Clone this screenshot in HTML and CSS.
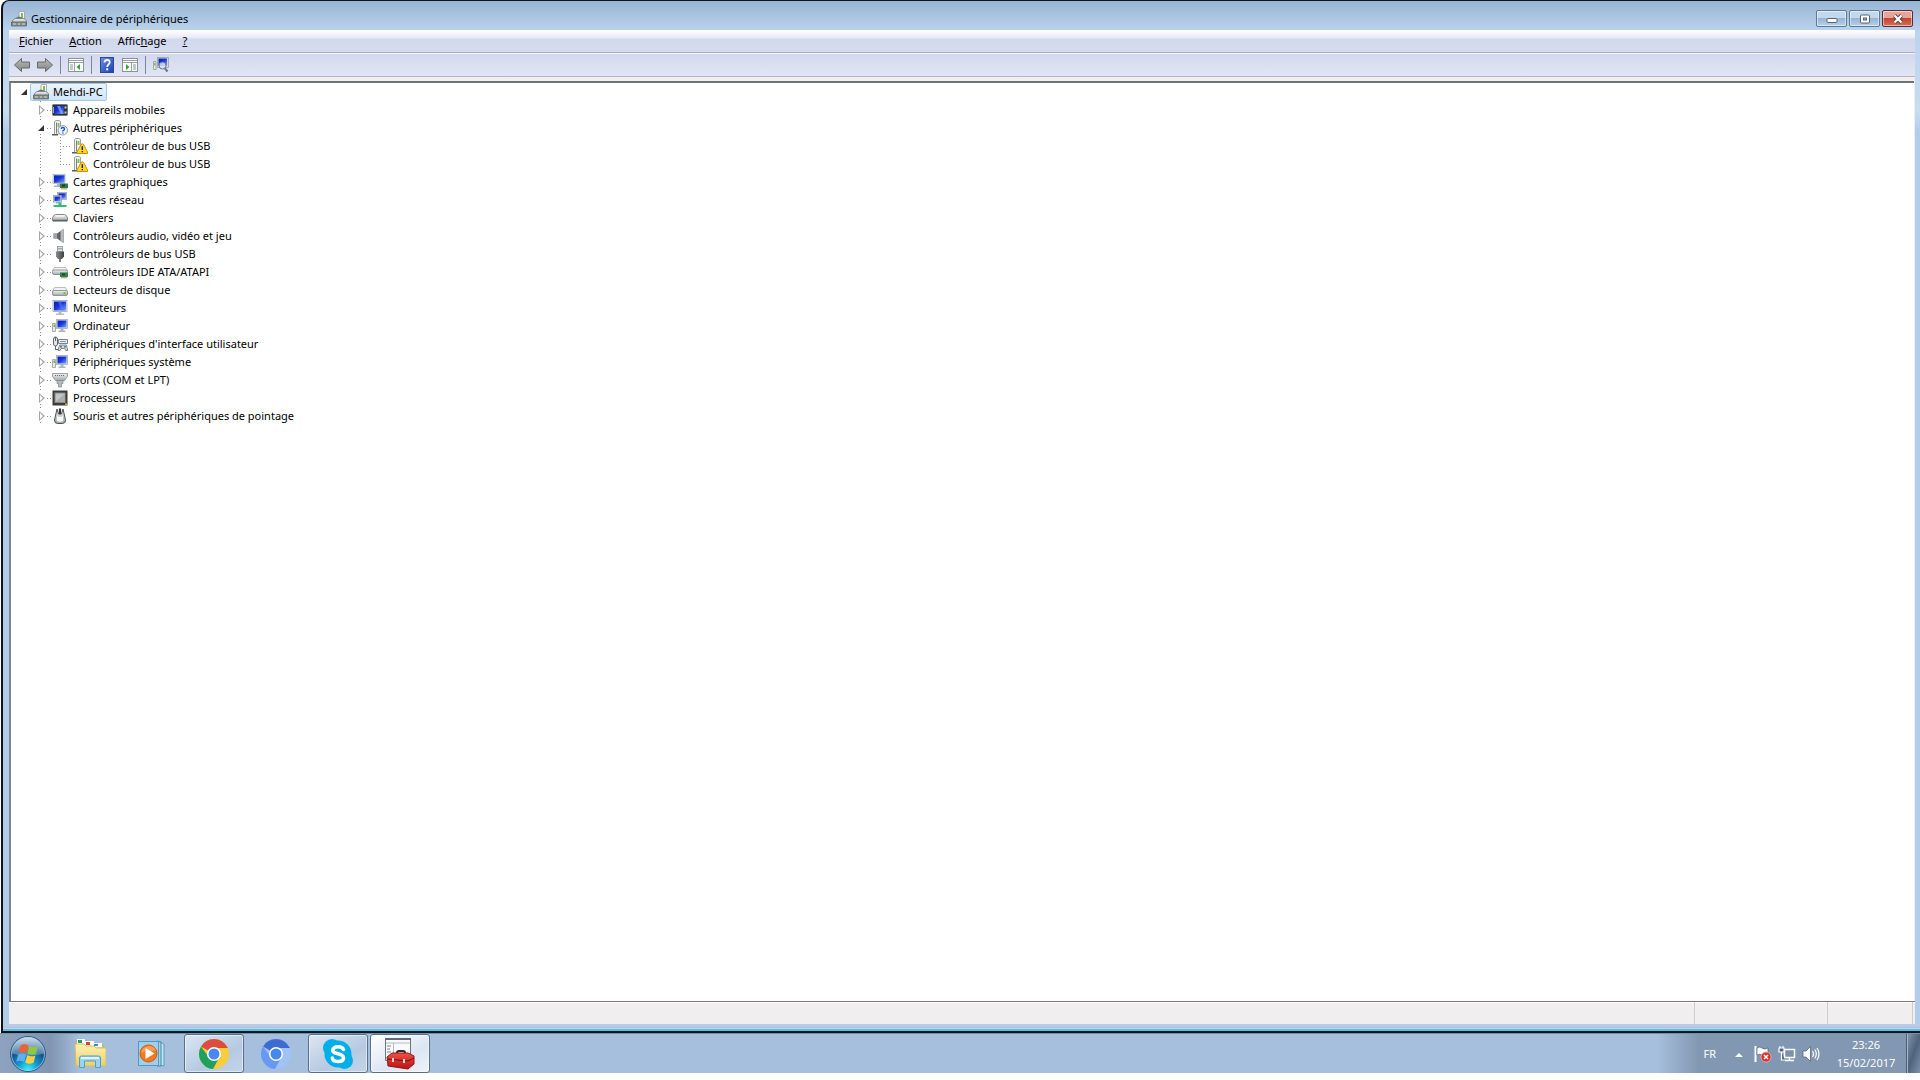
FILE: index.html
```html
<!DOCTYPE html>
<html lang="fr">
<head>
    <meta charset="UTF-8">
    <meta name="viewport" content="width=device-width, initial-scale=1.0">
    <title>Gestionnaire de périphériques</title>
    <link rel="stylesheet" href="styles.css">
</head>
<body>
    <svg class="defs" aria-hidden="true">
        <defs>
            <linearGradient id="gScreen" x1="0" y1="0" x2="1" y2="1">
                <stop offset="0" stop-color="#0a1fb0"/>
                <stop offset="0.45" stop-color="#1733dc"/>
                <stop offset="1" stop-color="#7fa4f4"/>
            </linearGradient>
            <linearGradient id="gMetal" x1="0" y1="0" x2="0" y2="1">
                <stop offset="0" stop-color="#f2f3f3"/>
                <stop offset="1" stop-color="#a3a8aa"/>
            </linearGradient>
            <linearGradient id="gDark" x1="0" y1="0" x2="1" y2="0">
                <stop offset="0" stop-color="#8b8b8b"/>
                <stop offset="1" stop-color="#3f3f3f"/>
            </linearGradient>
            <linearGradient id="gArrow" x1="0" y1="0" x2="0" y2="1">
                <stop offset="0" stop-color="#b9b9b9"/>
                <stop offset="1" stop-color="#858585"/>
            </linearGradient>
            <linearGradient id="gHelp" x1="0" y1="0" x2="1" y2="1">
                <stop offset="0" stop-color="#6c8fe6"/>
                <stop offset="1" stop-color="#1d3fae"/>
            </linearGradient>
            <radialGradient id="gOrb" cx="0.5" cy="0.95" r="0.85">
                <stop offset="0" stop-color="#3cf0ff"/>
                <stop offset="0.35" stop-color="#1497cf"/>
                <stop offset="0.7" stop-color="#14528a"/>
                <stop offset="1" stop-color="#3f6f9d"/>
            </radialGradient>
            <linearGradient id="gShine" x1="0" y1="0" x2="0" y2="1">
                <stop offset="0" stop-color="#e5f0f8" stop-opacity="0.85"/>
                <stop offset="1" stop-color="#a8c4dc" stop-opacity="0.35"/>
            </linearGradient>
            <linearGradient id="gFolder" x1="0" y1="0" x2="0" y2="1">
                <stop offset="0" stop-color="#fdf3b4"/>
                <stop offset="1" stop-color="#e9cf6c"/>
            </linearGradient>
            <linearGradient id="gRed" x1="0" y1="0" x2="0" y2="1">
                <stop offset="0" stop-color="#ee5148"/>
                <stop offset="1" stop-color="#b51313"/>
            </linearGradient>
        </defs>
        <symbol id="i-computer" viewBox="0 0 16 16">
            <path d="M8 8V1.500Q8 .5 9 .5H13.500V9H8Z" fill="#f4f5f2" stroke="#9a9d98" stroke-width="0.8"/>
            <path d="M10 2h2v5h-2z" fill="#7cc04a"/>
            <path d="M4.500 7 8 5.500l4 1.500-1 2H4Z" fill="#6b7070"/>
            <path d="M1.500 9.500 4 7.500h9l2.500 2v3H1.500Z" fill="url(#gMetal)" stroke="#747a7c" stroke-width="0.8"/>
            <path d="M0.500 11h15v4h-15z" fill="#858b8c" stroke="#555b5b" stroke-width="0.7"/>
            <path d="M2 13h3m2 0h2m2 0h3" stroke="#d4d8d8"/>
        </symbol>
        <symbol id="i-mobile" viewBox="0 0 16 16">
            <rect x="0.500" y="2.500" width="15" height="11" rx="1" fill="#2f3238" stroke="#777b82"/>
            <rect x="2.500" y="4" width="9" height="8" fill="url(#gScreen)"/>
            <path d="M5 4h3l3.500 8H9Z" fill="#7da3ff" opacity="0.8"/>
            <path d="M12.500 4.500h2v2h-2zM12.500 9.500h2v2h-2z" fill="#c9cdd3"/>
            <path d="M1 5h1v6H1z" fill="#a9adb3"/>
        </symbol>
        <symbol id="i-tower" viewBox="0 0 16 16">
            <path d="M2.500 1.500 4 .5h3l1.500 1v12l-4 1H2.500Z" fill="#f3f4f2" stroke="#858985" stroke-width="0.8"/>
            <path d="M4.500 2.500v11" stroke="#7c807c"/>
            <path d="M5.500 3h2v4h-2z" fill="#82bf5c"/>
            <path d="M0 14h6v1.500H0z" fill="#565c5c"/>
        </symbol>
        <symbol id="i-unknown" viewBox="0 0 16 16">
            <use href="#i-tower"/>
            <circle cx="10.800" cy="10.300" r="4.700" fill="#f1f5fc" stroke="#8190aa" stroke-width="0.9"/>
            <path d="M9.200 9Q9.300 7.500 10.900 7.500T12.500 9Q12.500 9.900 11.500 10.400T10.900 11.500" fill="none" stroke="#2450b8" stroke-width="1.300"/>
            <circle cx="10.900" cy="13" r="0.800" fill="#2450b8"/>
        </symbol>
        <symbol id="i-warning" viewBox="0 0 16 16">
            <use href="#i-tower"/>
            <path d="M9 6.500Q10.300 5 11.600 6.500L15.500 14v1.500H5V14Z" fill="#ffd52e" stroke="#c59400" stroke-linejoin="round"/>
            <path d="M10.300 8.300v3.700M10.300 13v1.300" stroke="#2b2100" stroke-width="1.400"/>
        </symbol>
        <symbol id="i-monitor" viewBox="0 0 16 16">
            <rect x="1" y="0.500" width="14" height="11" fill="#dfe4ea" stroke="#8f9aa5" stroke-width="0.700"/>
            <rect x="2" y="1.500" width="12" height="9" fill="url(#gScreen)"/>
            <path d="M6 1.500h3l4 9h-4Z" fill="#4f74f5" opacity="0.600"/>
            <path d="M6.500 11.500h3v2h2.500v1.500H4v-1.500h2.500z" fill="#b6bbbf"/>
        </symbol>
        <symbol id="i-display" viewBox="0 0 16 16">
            <rect x="1" y="0.500" width="12" height="9" fill="#dfe4ea" stroke="#a3adb8" stroke-width="0.700"/>
            <rect x="2" y="1.300" width="10.500" height="7.500" fill="url(#gScreen)"/>
            <path d="M5 9.500h4v2H5zM2 11.500h8V13H2z" fill="#aeb4b8"/>
            <path d="M8 9.500h8v4.500H8z" fill="#2f7a4c"/>
            <path d="M9 14h6v1.500H9z" fill="#d1b954"/>
            <path d="M10 10.500h3v2h-3z" fill="#173d2a"/>
        </symbol>
        <symbol id="i-network" viewBox="0 0 16 16">
            <rect x="5.500" y="0.500" width="9" height="7" fill="#d8dee8" stroke="#8b97ab" stroke-width="0.700"/>
            <rect x="6.500" y="1.300" width="7.300" height="5.300" fill="url(#gScreen)"/>
            <rect x="1.500" y="3.500" width="8" height="6.500" fill="#d8dee8" stroke="#8b97ab" stroke-width="0.700"/>
            <rect x="2.500" y="4.500" width="6" height="4.500" fill="url(#gScreen)"/>
            <path d="M4 10h4v1.500H4z" fill="#a4aab4"/>
            <path d="M6.500 10.500h3v2.500h5v2h-13v-2h5z" fill="#2fbd78"/>
        </symbol>
        <symbol id="i-keyboard" viewBox="0 0 16 16">
            <path d="M3.500 4.500h9Q14.500 4.500 15.500 8v3h-15V8Q1.500 4.500 3.500 4.500Z" fill="url(#gMetal)" stroke="#868b8e"/>
            <path d="M1 10.500h14" stroke="#5d6264" stroke-width="1.500"/>
            <path d="M4 6h8" stroke="#fff"/>
        </symbol>
        <symbol id="i-audio" viewBox="0 0 16 16">
            <path d="M1.500 5.500h3.500L11.500 1v14L5 10.500H1.500Z" fill="url(#gDark)"/>
            <path d="M5 5.500v5H1.500v-5z" fill="#a0a4a7"/>
            <path d="M8.500 3 11.500 1v14l-3-2Z" fill="#b7babd"/>
        </symbol>
        <symbol id="i-usb" viewBox="0 0 16 16">
            <rect x="5.500" y="0.500" width="5" height="5" fill="#e3e5e6" stroke="#8c9092" stroke-width="0.800"/>
            <path d="M6.500 2h1v1.500h-1zM8.500 2h1v1.500h-1z" fill="#6b6e70"/>
            <path d="M4 5.500h8v5L10 13H6L4 10.500Z" fill="url(#gDark)"/>
            <path d="M8 13v3" stroke="#555" stroke-width="1.500"/>
        </symbol>
        <symbol id="i-disk" viewBox="0 0 16 16">
            <path d="M2.500 5.500h11l2 4H.5Z" fill="#f1f2f2" stroke="#a2a6a8" stroke-width="0.700"/>
            <rect x="0.500" y="8.500" width="15" height="5" rx="1.500" fill="url(#gMetal)" stroke="#7d8284" stroke-width="0.800"/>
            <path d="M11.500 10h2v2h-2z" fill="#6cc435"/>
        </symbol>
        <symbol id="i-ide" viewBox="0 0 16 16">
            <path d="M2.500 3.500h11l2 3H.5Z" fill="#f1f2f2" stroke="#a2a6a8" stroke-width="0.700"/>
            <rect x="0.500" y="6" width="15" height="4.500" rx="1.500" fill="url(#gMetal)" stroke="#7d8284" stroke-width="0.800"/>
            <path d="M8 8.500h8V13H8z" fill="#2f8453"/>
            <path d="M9 13h6v1.300H9z" fill="#bfb25a"/>
            <path d="M10 9.500h3v2h-3z" fill="#174a30"/>
        </symbol>
        <symbol id="i-pc" viewBox="0 0 16 16">
            <rect x="4.500" y="1.500" width="11" height="9" fill="#dfe4ea" stroke="#97a2ae" stroke-width="0.700"/>
            <rect x="5.500" y="2.500" width="9" height="7" fill="url(#gScreen)"/>
            <path d="M8.500 10.500h3v2h2V14h-7v-1.500h2z" fill="#b0b5b9"/>
            <path d="M0.500 5.500h3v8h-3z" fill="#e7e9e7" stroke="#8b908b" stroke-width="0.700"/>
            <path d="M1.500 6.500h1.500V9H1.500z" fill="#6cb548"/>
        </symbol>
        <symbol id="i-hid" viewBox="0 0 16 16">
            <rect x="1.500" y="1" width="4" height="9" rx="2" fill="#e4e6e7" stroke="#62686b"/>
            <path d="M3.500 1v4M3.500 10v3.500H7" fill="none" stroke="#62686b"/>
            <path d="M6.500 3.500h9v4h-9z" fill="#ebeced" stroke="#6f7578" stroke-width="0.900"/>
            <path d="M8 5.500h6" stroke="#8d9396"/>
            <path d="M7.500 9h7l1.200 5.500h-2l-1-2H9l-1 2H6Z" fill="#d5d8da" stroke="#6c7275" stroke-width="0.800"/>
            <circle cx="9" cy="10.800" r="1" fill="#3b83bd"/>
            <circle cx="13" cy="10.800" r="1" fill="#3b83bd"/>
        </symbol>
        <symbol id="i-port" viewBox="0 0 16 16">
            <path d="M0.500 1.500h15v3l-3 4h-9l-3-4Z" fill="url(#gMetal)" stroke="#888d91" stroke-width="0.800"/>
            <path d="M3 3.500h10" stroke="#62686b" stroke-dasharray="1 1"/>
            <path d="M5 8.500h6v3H9.500V15h-3v-3.500H5Z" fill="#b4babe" stroke="#7c8286" stroke-width="0.700"/>
        </symbol>
        <symbol id="i-cpu" viewBox="0 0 16 16">
            <rect x="0.500" y="0.500" width="15" height="15" fill="#3e3d38"/>
            <rect x="3" y="3" width="10" height="9.500" fill="#c3c5c6" stroke="#85878a"/>
            <path d="m3.500 12 9.500-8.500V12z" fill="#aaadae"/>
            <path d="M13 13.500h2v2h-2z" fill="#d3a92c"/>
        </symbol>
        <symbol id="i-mouse" viewBox="0 0 16 16">
            <path d="M5 1 2.500 12q0 3.500 3 3.500h5q3 0 3-3.500L11 1 9.500 6h-3Z" fill="url(#gMetal)" stroke="#4c5153"/>
            <path d="M8 .5V6" stroke="#333" stroke-width="2.200"/>
            <path d="M5 8q3 2 6 0v5q-3 1.500-6 0Z" fill="#f8f9f9"/>
        </symbol>
        <symbol id="i-panel" viewBox="0 0 16 16">
            <rect x="0.500" y="1.500" width="15" height="13" fill="#fbfbfb" stroke="#8e9297"/>
            <path d="M1 3.500h14M1 5.500h14" stroke="#9ca1a7"/>
            <path d="M6.500 6v8" stroke="#9ca1a7"/>
            <path d="M2 8h3M2 10h3M2 12h3" stroke="#8a93a0"/>
            <path d="M12 7v6L8.500 10Z" fill="#35a635"/>
        </symbol>
        <symbol id="i-scan" viewBox="0 0 16 16">
            <rect x="4.500" y="0.500" width="11" height="10" fill="#d5dae0" stroke="#9098a2" stroke-width="0.700"/>
            <rect x="5.500" y="1.500" width="8.500" height="7.500" fill="url(#gScreen)"/>
            <path d="M0.500 4.500h2.500v8H.5z" fill="#e7e9e7" stroke="#8b908b" stroke-width="0.700"/>
            <path d="M1.200 6h1.300v2.500H1.200z" fill="#6cb548"/>
            <circle cx="9.500" cy="8.500" r="3.500" fill="#d9e8f8" fill-opacity="0.800" stroke="#6b7786"/>
            <path d="m12 11.500 2.500 3" stroke="#6b7786" stroke-width="2"/>
        </symbol>
    </svg>

    <main class="window">
        <header class="titlebar">
            <svg class="icon"><use href="#i-computer"/></svg>
            <h1>Gestionnaire de périphériques</h1>
            <div class="caption-buttons">
                <button class="caption-btn" aria-label="Réduire">
                    <svg width="12" height="10"><rect x="1" y="4.500" width="10" height="4" rx="1" fill="#fff" stroke="#59606e"/></svg>
                </button>
                <button class="caption-btn" aria-label="Agrandir">
                    <svg width="12" height="10"><rect x="1.500" y="1" width="9" height="8" rx="1" fill="#fff" stroke="#59606e"/><rect x="4.500" y="4" width="3" height="2" fill="#9dbbd8" stroke="#59606e"/></svg>
                </button>
                <button class="caption-btn close" aria-label="Fermer">
                    <svg width="12" height="10"><path d="m2.500 1.500 7 7m0-7-7 7" stroke="#5d3a40" stroke-width="4"/><path d="m2.500 1.500 7 7m0-7-7 7" stroke="#fff" stroke-width="2.300"/></svg>
                </button>
            </div>
        </header>

        <div class="client">
            <nav class="menubar">
                <button><u>F</u>ichier</button>
                <button><u>A</u>ction</button>
                <button>Affic<u>h</u>age</button>
                <button><u>?</u></button>
            </nav>
            <div class="toolbar">
                <button aria-label="Précédent"><svg class="icon"><path d="M.5 8 7.500 1.500v3.500h8v6h-8v3.500Z" fill="url(#gArrow)" stroke="#686868"/></svg></button>
                <button aria-label="Suivant"><svg class="icon"><path d="M15.500 8 8.500 1.500v3.500h-8v6h8v3.500Z" fill="url(#gArrow)" stroke="#686868"/></svg></button>
                <span class="separator"></span>
                <button aria-label="Afficher l'arborescence"><svg class="icon"><use href="#i-panel"/></svg></button>
                <span class="separator"></span>
                <button aria-label="Aide"><svg class="icon"><rect x="1.500" y="0.500" width="13" height="15" fill="url(#gHelp)" stroke="#2b489c"/><path d="M5.500 5.500Q5.700 3 8.200 3t2.500 2.300Q10.700 6.500 9.500 7.500T8.200 10" fill="none" stroke="#fff" stroke-width="1.800"/><path d="M7.200 11.300h2v2h-2z" fill="#fff"/></svg></button>
                <button aria-label="Afficher le volet Actions"><svg class="icon flip"><use href="#i-panel"/></svg></button>
                <span class="separator"></span>
                <button aria-label="Rechercher les modifications"><svg class="icon"><use href="#i-scan"/></svg></button>
            </div>

            <div class="tree">
                <div class="row root">
                    <button class="toggle open" aria-label="Réduire Mehdi-PC"></button>
                    <span class="selected"><svg class="icon"><use href="#i-computer"/></svg>Mehdi-PC</span>
                </div>
                <ul class="categories">
                    <li class="row"><button class="toggle" aria-label="Développer"></button><svg class="icon"><use href="#i-mobile"/></svg>Appareils mobiles</li>
                    <li>
                        <div class="row"><button class="toggle open" aria-label="Réduire"></button><svg class="icon"><use href="#i-unknown"/></svg>Autres périphériques</div>
                        <ul class="devices">
                            <li class="row"><svg class="icon"><use href="#i-warning"/></svg>Contrôleur de bus USB</li>
                            <li class="row"><svg class="icon"><use href="#i-warning"/></svg>Contrôleur de bus USB</li>
                        </ul>
                    </li>
                    <li class="row"><button class="toggle" aria-label="Développer"></button><svg class="icon"><use href="#i-display"/></svg>Cartes graphiques</li>
                    <li class="row"><button class="toggle" aria-label="Développer"></button><svg class="icon"><use href="#i-network"/></svg>Cartes réseau</li>
                    <li class="row"><button class="toggle" aria-label="Développer"></button><svg class="icon"><use href="#i-keyboard"/></svg>Claviers</li>
                    <li class="row"><button class="toggle" aria-label="Développer"></button><svg class="icon"><use href="#i-audio"/></svg>Contrôleurs audio, vidéo et jeu</li>
                    <li class="row"><button class="toggle" aria-label="Développer"></button><svg class="icon"><use href="#i-usb"/></svg>Contrôleurs de bus USB</li>
                    <li class="row"><button class="toggle" aria-label="Développer"></button><svg class="icon"><use href="#i-ide"/></svg>Contrôleurs IDE ATA/ATAPI</li>
                    <li class="row"><button class="toggle" aria-label="Développer"></button><svg class="icon"><use href="#i-disk"/></svg>Lecteurs de disque</li>
                    <li class="row"><button class="toggle" aria-label="Développer"></button><svg class="icon"><use href="#i-monitor"/></svg>Moniteurs</li>
                    <li class="row"><button class="toggle" aria-label="Développer"></button><svg class="icon"><use href="#i-pc"/></svg>Ordinateur</li>
                    <li class="row"><button class="toggle" aria-label="Développer"></button><svg class="icon"><use href="#i-hid"/></svg>Périphériques d'interface utilisateur</li>
                    <li class="row"><button class="toggle" aria-label="Développer"></button><svg class="icon"><use href="#i-pc"/></svg>Périphériques système</li>
                    <li class="row"><button class="toggle" aria-label="Développer"></button><svg class="icon"><use href="#i-port"/></svg>Ports (COM et LPT)</li>
                    <li class="row"><button class="toggle" aria-label="Développer"></button><svg class="icon"><use href="#i-cpu"/></svg>Processeurs</li>
                    <li class="row"><button class="toggle" aria-label="Développer"></button><svg class="icon"><use href="#i-mouse"/></svg>Souris et autres périphériques de pointage</li>
                </ul>
            </div>

            <div class="statusbar">
                <span></span>
                <span></span>
                <span></span>
            </div>
        </div>
    </main>

    <footer class="taskbar">
        <button class="start" aria-label="Démarrer">
            <svg width="38" height="38" viewBox="0 0 38 38">
                <circle cx="19" cy="19" r="17.500" fill="url(#gOrb)" stroke="#355b80"/>
                <path d="M2.500 18.500a16.500 16.500 0 0 1 33 0Q19 23 2.500 18.500Z" fill="url(#gShine)"/>
                <circle cx="19" cy="19" r="16.500" fill="none" stroke="#a9d2ea" stroke-opacity="0.700"/>
                <path d="M11.500 10.500q4-2.300 8 0l-2 7.500q-4-2-8 0Z" fill="#ee6132"/>
                <path d="M20.500 11q4 2.300 8.500.3l-2 7.500q-4 2-8.500-.3Z" fill="#92c83e"/>
                <path d="M9.200 19.500q4-2 8 .2l-2 7.300q-4-2.200-8-.2Z" fill="#5db0ec"/>
                <path d="M18.200 20.200q4.200 2.200 8.300.2l-2 7.400q-4.300 2-8.300-.3Z" fill="#fbd040"/>
            </svg>
        </button>
        <div class="apps">
            <button class="app" aria-label="Explorateur Windows">
                <svg width="32" height="32" viewBox="0 0 32 32">
                    <path d="M2 4h10l2 3h15v20H2Z" fill="#edd782" stroke="#c8a948"/>
                    <path d="M3 1h8v6H3z" fill="#fff"/><path d="M4 2h4v3H4z" fill="#28a052"/>
                    <path d="M11 3h9v5h-9z" fill="#fff"/><path d="M12 4h4v3h-4z" fill="#d04d2c"/>
                    <path d="M19 5h9v4h-9z" fill="#fff"/><path d="M20 6h4v2h-4z" fill="#328ec6"/>
                    <path d="M1 6h9l2 2h8l2 2h10v18H2Z" fill="url(#gFolder)" stroke="#d8bd5f"/>
                    <path d="M5.500 29.500V20q0-2 2-2h17q2 0 2 2v9.500h-5V23h-11v6.500Z" fill="#9bd3ef" stroke="#4f9fcb"/>
                    <path d="M7 20h18" stroke="#e2f5fd" stroke-width="2"/>
                </svg>
            </button>
            <button class="app" aria-label="Lecteur Windows Media">
                <svg width="32" height="32" viewBox="0 0 32 32">
                    <path d="m24 4 4 2v22l-4-1Z" fill="#c6e2f2" stroke="#5c9ec2"/>
                    <path d="m21 3 4 1v24h-4Z" fill="#a8d2e8" stroke="#3e88b2"/>
                    <path d="M2.500 3.500h20v24h-20Z" fill="#a0cfe9" stroke="#4f98bf"/>
                    <circle cx="12.500" cy="15.500" r="8.500" fill="#f27a20" stroke="#d3590a"/>
                    <path d="M5 14.500a8 8 0 0 1 15-2Q12.500 12.500 5 14.500Z" fill="#fbb37a" opacity="0.600"/>
                    <path d="m9.500 10 9 5.500-9 5.500z" fill="#fff"/>
                </svg>
            </button>
            <button class="app running" aria-label="Google Chrome">
                <svg width="32" height="32" viewBox="0 0 32 32">
                    <circle cx="16" cy="16" r="15" fill="#f7cd3a"/>
                    <path d="M16 16 3 8.500A15 15 0 0 1 29 8.500Q30 10 30 10H16Z" fill="#dc4c3f"/>
                    <path d="M3 8.500A15 15 0 0 0 15 31l6.500-12L16 16l-6 2Z" fill="#1fa15d"/>
                    <circle cx="16" cy="16" r="7" fill="#fff"/>
                    <circle cx="16" cy="16" r="5.500" fill="#4687f1"/>
                </svg>
            </button>
            <button class="app" aria-label="Chromium">
                <svg width="32" height="32" viewBox="0 0 32 32">
                    <circle cx="16" cy="16" r="15" fill="#a0c1fa"/>
                    <path d="M16 16 3 8.500A15 15 0 0 1 29 8.500Q30 10 30 10H16Z" fill="#3d6bd0"/>
                    <path d="M3 8.500A15 15 0 0 0 15 31l6.500-12L16 16l-6 2Z" fill="#6798f2"/>
                    <circle cx="16" cy="16" r="7" fill="#fff"/>
                    <circle cx="16" cy="16" r="5.500" fill="#4687f1"/>
                </svg>
            </button>
            <button class="app running" aria-label="Skype">
                <svg width="32" height="32" viewBox="0 0 32 32">
                    <circle cx="16" cy="16" r="13.500" fill="#00aee8"/>
                    <circle cx="10" cy="10" r="9" fill="#00aee8"/>
                    <circle cx="22.500" cy="22.500" r="8.500" fill="#00aee8"/>
                    <path d="M21.500 11.500Q20.500 8.700 16 8.700T10.700 12Q10.700 14.700 16 15.800T21.500 20Q21.500 23.500 16 23.500T10.300 20" fill="none" stroke="#fff" stroke-width="3.600" stroke-linecap="round"/>
                </svg>
            </button>
            <button class="app running" aria-label="Gestionnaire de périphériques">
                <svg width="32" height="32" viewBox="0 0 32 32">
                    <path d="M1.500 .5h25v22h-25z" fill="#f8f9fb" stroke="#6d7480"/>
                    <path d="M1 0h26v2H1z" fill="#5d6a7c"/>
                    <path d="M2 5h24M9.500 5v17" stroke="#b3bac4"/>
                    <path d="M3 8h4M3 11h3M3 14h4" stroke="#7b8490"/>
                    <path d="M13 16v-1q0-2 2-2h4q2 0 2 2v2" fill="none" stroke="#292929" stroke-width="2"/>
                    <path d="m3 19 5-4h16l6 3v8l-6 5-20-3Z" fill="url(#gRed)" stroke="#9c1414"/>
                    <path d="m3 21 21 2 6-3" fill="none" stroke="#7c0c0c"/>
                    <path d="M8 20h2v4H8zM19 21h2v4h-2z" fill="#e8dcd6"/>
                </svg>
            </button>
        </div>
        <div class="tray">
            <span class="lang">FR</span>
            <button aria-label="Afficher les icônes cachées"><svg width="10" height="16"><path d="M1 11h8L5 7Z" fill="#fff"/></svg></button>
            <button aria-label="Centre de maintenance">
                <svg width="18" height="18" viewBox="0 0 18 18">
                    <path d="M1.500 1v16" stroke="#fff" stroke-width="2"/>
                    <path d="M3 3q3-2 5 0t6 0v7q-4 1.500-6 0t-5 0Z" fill="#fff" stroke="#4b5b70" stroke-width="0.700"/>
                    <circle cx="12" cy="12" r="5" fill="#d8322c" stroke="#f1b3ae" stroke-width="0.800"/>
                    <path d="m10 10 4 4m0-4-4 4" stroke="#fff" stroke-width="1.500"/>
                </svg>
            </button>
            <button aria-label="Réseau">
                <svg width="18" height="18" viewBox="0 0 18 18">
                    <path d="M6.500 4.500h10v8h-10z" fill="#7e91ab" stroke="#fff" stroke-width="1.500"/>
                    <path d="M7 15.500h9M11.500 13v2" stroke="#fff" stroke-width="1.500"/>
                    <path d="M1 3h5v4H1zM2 1v2M5 1v2M3.500 7v8H7" fill="#56667e" stroke="#fff" stroke-width="1.200"/>
                </svg>
            </button>
            <button aria-label="Volume">
                <svg width="18" height="18" viewBox="0 0 18 18">
                    <path d="M1 6h3l4.500-4.500v15L4 12H1Z" fill="#fff" stroke="#4b5b70" stroke-width="0.700"/>
                    <path d="M10.500 6q2 3 0 6M12.800 4.500q3 4.500 0 9M15 3q4 6 0 12" fill="none" stroke="#fff" stroke-width="1.200"/>
                </svg>
            </button>
            <div class="clock">
                <time>23:26</time>
                <time>15/02/2017</time>
            </div>
        </div>
        <button class="show-desktop" aria-label="Afficher le bureau"></button>
    </footer>
</body>
</html>
```

FILE: styles.css
```css
* {
    margin: 0;
    padding: 0;
    box-sizing: border-box;
}
body {
    display: flex;
    flex-direction: column;
    height: 100vh;
    padding-bottom: 7px;
    overflow: hidden;
    background: #fff;
    color: #000;
    font-family: "Noto Sans", "Open Sans", sans-serif;
    font-size: 11px;
    line-height: 18px;
}
button {
    border: 0;
    background: none;
    color: inherit;
    font: inherit;
}
svg {
    display: block;
    flex: none;
}
ul {
    list-style: none;
}
.defs {
    position: absolute;
    width: 0;
    height: 0;
}
.icon {
    width: 16px;
    height: 16px;
}
.flip {
    transform: scaleX(-1);
}

/* Window frame */
.window {
    flex: 1;
    display: flex;
    flex-direction: column;
    min-height: 0;
    margin-left: 1px;
    padding: 0 5px 7px 6px;
    border: 2px solid #10141a;
    border-width: 1px 0 2px 2px;
    border-top-left-radius: 8px;
    background:
        linear-gradient(#b4cdea 0 2px, #c3c2de 2px 4px, #b4d4ee 4px 5px, #52c6e0 5px 7px) bottom / 100% 7px no-repeat,
        linear-gradient(#98b5d4, #bbd3ec 30px, #c9dcf0 110px, #b2cdea 130px);
}
.titlebar {
    display: flex;
    align-items: center;
    gap: 4px;
    height: 29px;
    padding: 6px 2px 0;
}
.titlebar h1 {
    flex: 1;
    font-size: 11px;
    font-weight: normal;
}
.caption-buttons {
    display: flex;
    gap: 2px;
}
.caption-btn {
    display: flex;
    align-items: center;
    justify-content: center;
    width: 31px;
    height: 17px;
    border: 1px solid #5f7893;
    border-radius: 2px;
    background: linear-gradient(#c3d8ed 0 45%, #96b5d5 50%, #b4d0ea);
    box-shadow: inset 0 0 0 1px rgba(255, 255, 255, 0.5);
}
.close {
    border-color: #5c2a30;
    background: linear-gradient(#e5a599 0 45%, #c3452f 50%, #d4705a);
}
.client {
    flex: 1;
    display: flex;
    flex-direction: column;
    min-height: 0;
    background: #f0eeee;
}

/* Menu and toolbar */
.menubar {
    display: flex;
    gap: 16px;
    height: 23px;
    padding: 0 10px;
    border-bottom: 1px solid #a9adc0;
    background: linear-gradient(#fff, #e6eaf5 8px, #d3d9ed 9px, #d6dcef);
}
.toolbar {
    display: flex;
    align-items: center;
    gap: 7px;
    height: 24px;
    padding: 0 5px;
    border-top: 1px solid #f6f7fb;
    border-bottom: 1px solid #b3b6c4;
    background: linear-gradient(#d3d9ed, #e1e5f4);
}
.separator {
    width: 1px;
    height: 18px;
    background: #7f8698;
}

/* Device tree */
.tree {
    flex: 1;
    min-height: 0;
    overflow: hidden;
    margin: 4px 1px 0 0;
    padding-left: 7px;
    border-top: 2px solid #6f7276;
    border-left: 2px solid #82868a;
    background: #fff;
}
.row {
    display: flex;
    align-items: center;
    height: 18px;
    white-space: nowrap;
}
.row > .icon {
    margin-right: 5px;
}
.selected {
    display: flex;
    align-items: center;
    gap: 4px;
    height: 18px;
    padding: 0 3px 0 2px;
    border: 1px solid #9fc9ea;
    border-radius: 2px;
    background: linear-gradient(#eaf4fd, #cfe5f8);
}
.toggle {
    width: 12px;
    height: 12px;
}
.toggle::before {
    content: "";
    display: block;
    width: 6px;
    height: 10px;
    margin-left: 4px;
    background: #a5a5a5;
    clip-path: polygon(0 0, 100% 50%, 0 100%, 0 0, 1px 2px, 1px 8px, 4px 5px, 1px 2px);
}
.toggle.open::before {
    width: 6px;
    height: 6px;
    margin-left: 3px;
    background: #333;
    clip-path: polygon(100% 0, 100% 100%, 0 100%);
}
/* dotted guide lines */
.categories {
    margin-left: 17px;
    background: repeating-linear-gradient(#8f8f8f 0 1px, transparent 1px 3px) 5px 0 / 1px 100% no-repeat;
}
.categories .toggle {
    width: 17px;
    background:
        repeating-linear-gradient(90deg, #8f8f8f 0 1px, #fff 1px 3px) right center / 5px 1px no-repeat,
        #fff;
}
.devices {
    margin-left: 25px;
    background: repeating-linear-gradient(#8f8f8f 0 1px, transparent 1px 3px) 0 0 / 1px 27px no-repeat;
}
.devices .row::before {
    content: "";
    width: 10px;
    height: 1px;
    margin-right: 2px;
    background: repeating-linear-gradient(90deg, #8f8f8f 0 1px, transparent 1px 3px);
}

.statusbar {
    display: flex;
    justify-content: flex-end;
    height: 23px;
    border-top: 1px solid #77797c;
    box-shadow: inset 0 1px #fff;
}
.statusbar span {
    width: 133px;
    border-left: 1px solid #d0cdcd;
}
.statusbar span:nth-child(2) {
    width: 85px;
}
.statusbar span:last-child {
    width: 3px;
}

/* Taskbar */
.taskbar {
    display: flex;
    height: 40px;
    border-top: 1px solid #7c8ea5;
    background: linear-gradient(90deg, #8da3c0, #7f95b2 50px, #a6bfdc 80px);
}
.start {
    padding: 0 13px 0 9px;
}
.apps {
    flex: 1;
    display: flex;
    gap: 2px;
}
.app {
    display: flex;
    align-items: center;
    justify-content: center;
    width: 60px;
}
.running {
    border: 1px solid #59708c;
    border-radius: 3px;
    background: linear-gradient(150deg, #dce6f1, #b5cae2 60%, #c3d4e8);
    box-shadow: inset 0 0 0 1px rgba(255, 255, 255, 0.5);
}
.running:last-child {
    background: linear-gradient(150deg, #fff, #dbe6f2 60%, #eef3f9);
}
.tray {
    display: flex;
    align-items: center;
    gap: 6px;
    padding-left: 46px;
    background: linear-gradient(90deg, #a6bfdc, #8297b2 42px);
    color: #fff;
}
.lang {
    margin-right: 12px;
}
.tray button:nth-of-type(1) {
    margin-right: 4px;
}
.clock {
    display: flex;
    flex-direction: column;
    align-items: center;
    width: 80px;
}
.show-desktop {
    width: 14px;
    border-left: 1px solid #4e6078;
    background: linear-gradient(110deg, #8597ac, #4f637e 50%, #7d91aa);
    box-shadow: inset 1px 0 #a6b5c8;
}
```
